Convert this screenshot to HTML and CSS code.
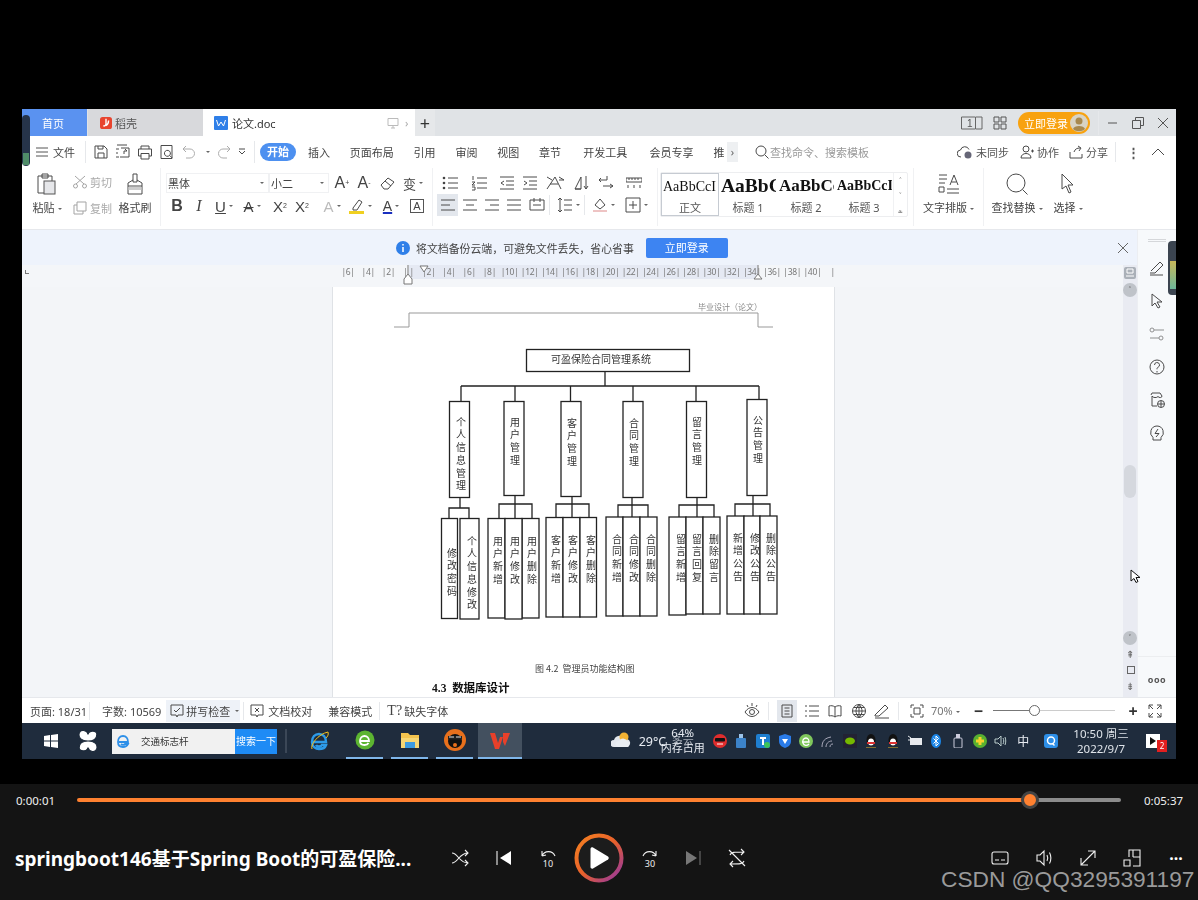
FILE: index.html
```html
<!DOCTYPE html>
<html lang="zh-CN">
<head>
<meta charset="utf-8">
<title>论文.doc</title>
<link rel="stylesheet" href="styles.css">
</head>
<body>
<div class="screen">
  <div class="window">
    <div class="meter-left"><span></span></div>
    <div class="meter-right"><span></span></div>

    <div class="tabs">
      <div class="tab home">首页</div>
      <div class="tab dao">
        <svg class="i12" viewBox="0 0 14 14"><rect width="14" height="14" rx="3" fill="#e8442e"/><path d="M7 2v6c0 2-2 3-3 2M10 4c0 3-1 5-3 6" stroke="#fff" stroke-width="1.6" fill="none"/></svg>
        <span>稻壳</span>
      </div>
      <div class="tab doc">
        <svg class="i14" viewBox="0 0 14 14"><rect width="14" height="14" rx="1" fill="#2f7fe8"/><path d="M2.5 4l2 6 2.500-4 2.500 4 2-6" stroke="#fff" stroke-width="1" fill="none"/></svg>
        <span class="doc-name">论文.doc</span>
        <svg class="i12 auto" viewBox="0 0 12 12"><path d="M1 1.500h10v7H1zM6 8.500v2.500M4 11h4" fill="none" stroke="#bbb"/></svg>
        <span class="more">›</span>
      </div>
      <div class="tab plus">+</div>
      <div class="tabs-right">
        <svg class="book" viewBox="0 0 22 14"><path d="M.5 1h14v12H.5zM15 1h6v12h-6" fill="none" stroke="#666"/><text x="6" y="11" class="book-t">1</text></svg>
        <svg class="i14" viewBox="0 0 14 14"><path d="M1 1h5v5H1zM8 1h5v5H8zM1 8h5v5H1zM8 8h5v5H8z" fill="none" stroke="#555"/></svg>
        <div class="login-pill">立即登录<svg class="avatar" viewBox="0 0 18 18"><circle cx="9" cy="9" r="9" fill="#d8d3c4"/><circle cx="9" cy="7" r="3.500" fill="#a8894f"/><path d="M3 15c1-4 11-4 12 0-3 3-9 3-12 0z" fill="#a8894f"/></svg></div>
        <i class="vsep tall"></i>
        <svg class="i12 min" viewBox="0 0 12 12"><path d="M1 6h9" stroke="#555"/></svg>
        <svg class="i12 rest" viewBox="0 0 12 12"><path d="M.5 3.500h8v8h-8zM3.500 3.500v-3h8v8h-3" fill="none" stroke="#555"/></svg>
        <svg class="i12 clo" viewBox="0 0 12 12"><path d="M1 1l10 10M11 1L1 11" stroke="#555"/></svg>
      </div>
    </div>

    <div class="menu">
      <svg class="i12 ham" viewBox="0 0 12 12"><path d="M0 2h12M0 6h12M0 10h12" stroke="#555"/></svg>
      <span class="m-file">文件</span>
      <i class="vsep"></i>
      <div class="quick">
        <svg class="i16" viewBox="0 0 16 16"><path d="M2 2h9l3 3v9H2zM5 14V9h6v5M5 2v3h5V2" class="ln"/></svg>
        <svg class="i16" viewBox="0 0 16 16"><path d="M2 1h10M1 5h3M1 9h2M1 13h3M6 4h8v9H5M9 10V7h3l-2-2" class="ln"/></svg>
        <svg class="i16" viewBox="0 0 16 16"><path d="M4 5V2h8v3M1.500 5h13v7H12M4 12H1.500V5M4 9.500h8V15H4z" class="ln"/></svg>
        <svg class="i16" viewBox="0 0 16 16"><path d="M2 1.500h11v13H2zM10.500 11.500a3 3 0 1 1 .1-.1l2.500 2.500" class="ln"/></svg>
        <svg class="i16 dim" viewBox="0 0 16 16"><path d="M5 2L2 5l3 3M2 5h7a4 4 0 0 1 0 9H5" class="ln"/></svg>
        <b class="caret"></b>
        <svg class="i16 dim redo" viewBox="0 0 16 16"><path d="M11 2l3 3-3 3M14 5H7a4 4 0 0 0 0 9h4" class="ln"/></svg>
        <svg class="i8" viewBox="0 0 8 8"><path d="M1 1h6M1 3l3 3 3-3" class="ln"/></svg>
      </div>
      <i class="vsep"></i>
      <span class="pill">开始</span>
      <nav class="m-items">
        <span>插入</span><span>页面布局</span><span>引用</span><span>审阅</span><span>视图</span><span>章节</span>
        <span class="x1">开发工具</span><span class="x1">会员专享</span><span class="cut">推</span>
      </nav>
      <span class="chev">›</span>
      <div class="search">
        <svg class="i14" viewBox="0 0 14 14"><circle cx="6" cy="6" r="5" class="ln"/><path d="M10 10l3.500 3.500" class="ln"/></svg>
        <span>查找命令、搜索模板</span>
      </div>
      <div class="m-right">
        <svg class="i16" viewBox="0 0 16 16"><path d="M4 13a3.500 3.500 0 0 1-.5-7A4.500 4.500 0 0 1 12 5.500" class="ln"/><circle cx="11" cy="11" r="3.500" fill="#667"/></svg><span>未同步</span>
        <svg class="i14 g1" viewBox="0 0 14 14"><circle cx="6" cy="4" r="3" class="ln"/><path d="M1 13c0-6 10-6 10 0zM11 6h3M12.500 4.500v3" class="ln"/></svg><span>协作</span>
        <svg class="i14 g2" viewBox="0 0 14 14"><path d="M1 7v6h12V9M5 7c1-3 3-4 6-4M9 1l3 2-2 3" class="ln"/></svg><span>分享</span>
        <i class="vsep mid"></i>
        <span class="kebab">⋮</span>
        <svg class="i12 g3" viewBox="0 0 12 12"><path d="M0 9l6-6 6 6" class="ln"/></svg>
      </div>
    </div>

    <div class="ribbon">
      <section class="g clip">
        <div class="bigcol paste">
          <svg class="i22" viewBox="0 0 22 22"><path d="M2 3h14v17H2zM6 1h6v4H6z" class="ln"/><rect x="8" y="8" width="11" height="13" fill="#e6e7ea" stroke="#555"/></svg>
          <span>粘贴<b class="caret"></b></span>
        </div>
        <div class="smallcol">
          <div class="s dimtxt"><svg class="i14" viewBox="0 0 14 14"><path d="M2 1l9 8M12 1L3 9" class="ln"/><circle cx="2.500" cy="11" r="2" class="ln"/><circle cx="11.500" cy="11" r="2" class="ln"/></svg>剪切</div>
          <div class="s dimtxt"><svg class="i14" viewBox="0 0 14 14"><path d="M4 1h9v9H4zM4 4H1v9h9v-3" class="ln"/></svg>复制</div>
        </div>
        <div class="bigcol brush">
          <svg class="i22" viewBox="0 0 22 22"><path d="M9 1h4v8H9zM9 7L4 10v3h14v-3l-5-3M4 13v8h14v-8" class="ln"/><rect x="4.500" y="14" width="13" height="3" fill="#ccc"/></svg>
          <span>格式刷</span>
        </div>
      </section>
      <i class="gsep"></i>
      <section class="g font">
        <div class="row">
          <div class="combo name"><span>黑体</span><b class="caret"></b></div>
          <div class="combo size"><span>小二</span><b class="caret"></b></div>
          <span class="tg big first">A<sup>+</sup></span>
          <span class="tg big">A<sup>-</sup></span>
          <svg class="i16 g4" viewBox="0 0 16 16"><path d="M1 10l7-7 6 4-6 7H4zM5 6l6 5" class="ln"/></svg>
          <span class="tg pin">变<b class="caret"></b></span>
        </div>
        <div class="row two">
          <span class="tg bold">B</span>
          <span class="tg ital">I</span>
          <span class="tg und">U<b class="caret"></b></span>
          <span class="tg strike">A<b class="caret"></b></span>
          <span class="tg sc first">X<sup>2</sup></span>
          <span class="tg sc">X<sub>2</sub></span>
          <span class="tg ghost">A<b class="caret"></b></span>
          <svg class="i16 g5" viewBox="0 0 16 16"><path d="M4 10l6-8 3 2-5 8H4z" class="ln"/><rect y="13" width="15" height="3" fill="#f0d020"/></svg><b class="caret"></b>
          <span class="tg blueA">A<b class="caret"></b></span>
          <span class="tg boxA">A</span>
        </div>
      </section>
      <i class="gsep"></i>
      <section class="g para">
        <div class="row r1">
          <svg class="i22" viewBox="0 0 22 16"><path d="M7 3h10M7 8h10M7 13h10" class="ln"/><circle cx="3" cy="3" r="1.300" fill="#444"/><circle cx="3" cy="8" r="1.300" fill="#444"/><circle cx="3" cy="13" r="1.300" fill="#444"/></svg>
          <svg class="i22" viewBox="0 0 22 16"><path d="M7 3h10M7 8h10M7 13h10M3 1v4M2 7h3l-3 3h3M2 12h3v3H2" class="ln"/></svg>
          <svg class="i16" viewBox="0 0 16 16"><path d="M1 2h14M7 6h8M7 10h8M1 14h14M5 6L2 8l3 2" class="ln"/></svg>
          <svg class="i16" viewBox="0 0 16 16"><path d="M1 2h14M7 6h8M7 10h8M1 14h14M2 6l3 2-3 2" class="ln"/></svg>
          <svg class="i22" viewBox="0 0 22 16"><path d="M2 2l5 3M2 14L10 2l6 12M5 9h8M14 2l5 3-5 0" class="ln"/></svg>
          <svg class="i16" viewBox="0 0 16 16"><path d="M1 14L7 2v12zM1 14h6M12 1v13M10 11l2 3 2-3" class="ln"/></svg>
          <svg class="i22" viewBox="0 0 22 16"><path d="M2 5h8V1M2 5l2-2M2 5l2 2M6 11h10M13 9l3 2-3 2" class="ln"/></svg>
          <svg class="i16" viewBox="0 0 16 16"><path d="M0 3h16v4H0zM3 3v2M6 3v2M9 3v2M12 3v2M2 10v3M8 10v3M14 10v3" class="ln"/></svg>
        </div>
        <div class="row r2">
          <span class="alignon"><svg class="i14" viewBox="0 0 14 14"><path d="M0 2h14M0 7h9M0 12h14" class="ln"/></svg></span>
          <svg class="i14" viewBox="0 0 14 14"><path d="M0 2h14M3 7h8M0 12h14" class="ln"/></svg>
          <svg class="i14" viewBox="0 0 14 14"><path d="M0 2h14M5 7h9M0 12h14" class="ln"/></svg>
          <svg class="i14" viewBox="0 0 14 14"><path d="M0 2h14M0 7h14M0 12h14" class="ln"/></svg>
          <svg class="i16" viewBox="0 0 16 16"><path d="M1 3h14v10H1zM5 1v4M11 1v4M4 8h8" class="ln"/></svg>
          <i class="vsep mid"></i>
          <svg class="i16" viewBox="0 0 16 16"><path d="M3 1v14M1 3l2-2 2 2M1 13l2 2 2-2M7 3h8M7 8h8M7 13h8" class="ln"/></svg><b class="caret"></b>
          <i class="vsep mid"></i>
          <svg class="i16" viewBox="0 0 16 16"><path d="M3 8l5-6 5 6-5 4z" class="ln"/><path d="M1 14h14" stroke="#d88" fill="none"/></svg><b class="caret"></b>
          <svg class="i16 g6" viewBox="0 0 16 16"><path d="M1 1h14v14H1zM8 4v8M4 8h8" class="ln"/></svg><b class="caret"></b>
        </div>
      </section>
      <i class="gsep"></i>
      <section class="styles">
        <div class="st on"><span class="aa a0">AaBbCcI</span><span>正文</span></div>
        <div class="st"><span class="aa a1">AaBbCcI</span><span>标题 1</span></div>
        <div class="st"><span class="aa a2">AaBbCcI</span><span>标题 2</span></div>
        <div class="st"><span class="aa a3">AaBbCcI</span><span>标题 3</span></div>
        <div class="st-scroll"><span>˄</span><span>˅</span><span>⩡</span></div>
      </section>
      <i class="gsep"></i>
      <section class="bigcol typeset">
        <svg class="i22" viewBox="0 0 22 22"><path d="M1 2h8M1 6h8M1 10h6M12 12l4-10 4 10M13.500 9h5M1 14h5v5H1zM9 16h12M9 20h12" class="ln"/></svg>
        <span>文字排版<b class="caret"></b></span>
      </section>
      <i class="gsep"></i>
      <section class="finds">
        <div class="bigcol find">
          <svg class="i22" viewBox="0 0 22 22"><circle cx="10" cy="10" r="9" class="ln"/><path d="M16.500 16.500l5 5" class="ln"/></svg>
          <span>查找替换<b class="caret"></b></span>
        </div>
        <div class="bigcol pick">
          <svg class="i22" viewBox="0 0 22 22"><path d="M5 1v15l4-3 3 7 2-1-3-7h5z" class="ln"/></svg>
          <span>选择<b class="caret"></b></span>
        </div>
      </section>
    </div>

    <div class="main">
      <div class="work">
        <div class="notice">
          <svg class="i14" viewBox="0 0 14 14"><circle cx="7" cy="7" r="7" fill="#2f7fe8"/><path d="M7 6v5M7 3v1.500" stroke="#fff" stroke-width="1.500"/></svg>
          <span class="n-text">将文档备份云端，可避免文件丢失，省心省事</span>
          <span class="n-btn">立即登录</span>
          <svg class="i10 n-close" viewBox="0 0 10 10"><path d="M0 0l10 10M10 0L0 10" stroke="#666"/></svg>
        </div>
        <div class="ruler">
          <span class="corner"></span>
          <div class="ruler-track">
            <span>|6|</span><span>|4|</span><span>|2|</span><span>| |</span><span>|2|</span><span>|4|</span><span>|6|</span><span>|8|</span>
            <span>|10|</span><span>|12|</span><span>|14|</span><span>|16|</span><span>|18|</span><span>|20|</span><span>|22|</span><span>|24|</span>
            <span>|26|</span><span>|28|</span><span>|30|</span><span>|32|</span><span>|34|</span><span>|36|</span><span>|38|</span><span>|40|</span><span>|</span>
          </div>
          <svg class="mark m1" viewBox="0 0 10 20"><path d="M5 0v9M1 14l4-5 4 5v5H1z" fill="#fff" stroke="#777"/></svg>
          <svg class="mark m2" viewBox="0 0 10 20"><path d="M1 1h8L5 7z" fill="#fff" stroke="#777"/></svg>
          <svg class="mark m3" viewBox="0 0 10 20"><path d="M5 0v9M1 14l4-5 4 5z" fill="#fff" stroke="#777"/></svg>
        </div>
        <div class="docarea">
          <div class="pagearea">
            <div class="page">
              <svg class="sheet" viewBox="333 287 501 410" width="501" height="410">
                <text x="698" y="310" class="hd">毕业设计（论文）</text>
                <path class="hline" d="M394 327h15v-14h349v14h15"/>

                <rect class="box" x="526.500" y="349.500" width="163" height="22"/>
                <text x="551" y="362.500" class="root">可盈保险合同管理系统</text>
                <path class="wire" d="M605 372v14M461 386h298M461 386v15M515 386v15M570.500 386v15M633 386v15M696 386v15M759 386v13"/>

                <rect class="box" x="449.500" y="401.500" width="20" height="96"/>
                <rect class="box" x="504" y="401.500" width="20" height="94"/>
                <rect class="box" x="561" y="401.500" width="20" height="95"/>
                <rect class="box" x="623" y="401.500" width="20" height="96"/>
                <rect class="box" x="686.500" y="401.500" width="20" height="96"/>
                <rect class="box" x="747" y="399.500" width="20" height="96"/>
                <text x="461" y="417" class="v">个人信息管理</text>
                <text x="515" y="417" class="v">用户管理</text>
                <text x="572" y="418" class="v">客户管理</text>
                <text x="634" y="418" class="v">合同管理</text>
                <text x="697" y="417" class="v">留言管理</text>
                <text x="758" y="415" class="v">公告管理</text>

                <path class="wire" d="M460 497v11M449 518v-10h20v10M515 495v24M499 519v-15h33v15M572 496v21M556 517v-13h33v13M632 497v20M618 517v-12h30v12M697 497v20M679 517v-12h35v12M753 495v21M735 516v-12h35v12"/>

                <rect class="box" x="441.500" y="518.500" width="16" height="100"/>
                <rect class="box" x="460" y="518.500" width="19" height="100.500"/>
                <text x="452" y="548" class="v">修改密码</text>
                <text x="472" y="536" class="v">个人信息修改</text>

                <rect class="box" x="488" y="518.500" width="17" height="99.500"/>
                <rect class="box" x="522" y="518.500" width="17" height="99.500"/>
                <rect class="box" x="505" y="518.500" width="17" height="100.500"/>
                <text x="498" y="536" class="v">用户新增</text>
                <text x="515" y="536" class="v">用户修改</text>
                <text x="532" y="536" class="v">用户删除</text>

                <rect class="box" x="546" y="517.500" width="17" height="99.500"/>
                <rect class="box" x="563" y="517.500" width="17" height="99.500"/>
                <rect class="box" x="580" y="517.500" width="16.500" height="99.500"/>
                <text x="556" y="535" class="v">客户新增</text>
                <text x="573" y="535" class="v">客户修改</text>
                <text x="591" y="535" class="v">客户删除</text>

                <rect class="box" x="606" y="517" width="17" height="99"/>
                <rect class="box" x="623" y="517" width="17" height="99"/>
                <rect class="box" x="640" y="517" width="17" height="99"/>
                <text x="617" y="534" class="v">合同新增</text>
                <text x="634" y="534" class="v">合同修改</text>
                <text x="651" y="534" class="v">合同删除</text>

                <rect class="box" x="669" y="517" width="17" height="98"/>
                <rect class="box" x="686" y="517" width="17" height="97"/>
                <rect class="box" x="703" y="517" width="17" height="97"/>
                <text x="681" y="534" class="v">留言新增</text>
                <text x="697" y="534" class="v">留言回复</text>
                <text x="714" y="534" class="v">删除留言</text>

                <rect class="box" x="727" y="516" width="17" height="98"/>
                <rect class="box" x="744" y="516" width="16" height="98"/>
                <rect class="box" x="760" y="516" width="17" height="98"/>
                <text x="738" y="533" class="v">新增公告</text>
                <text x="755" y="533" class="v">修改公告</text>
                <text x="771" y="533" class="v">删除公告</text>

                <text x="535" y="671.500" class="cap">图 4.2  管理员功能结构图</text>
                <text x="432" y="692" class="h3">4.3  数据库设计</text>
              </svg>
            </div>
            <svg class="mouse" viewBox="0 0 10 14"><path d="M1 1v11l3-2.500 2 4 2-1-2-4h4z" fill="#fff" stroke="#111"/></svg>
          </div>
          <div class="vscroll">
            <svg class="sq" viewBox="0 0 12 12"><rect width="12" height="12" rx="2" fill="#aab0b8"/><path d="M3 2h6v4H3zM2 9h8" stroke="#fff" fill="none"/></svg>
            <span class="sbtn">˄</span>
            <span class="thumb"></span>
            <span class="sbtn low">˅</span>
            <span class="nav">⇞</span><span class="nav sqn"></span><span class="nav">⇟</span>
          </div>
        </div>
      </div>
      <aside class="side">
        <span class="handle"></span>
        <svg class="i16" viewBox="0 0 16 16"><path d="M2 11L11 2l3 3-8 8H1M1 15h13" class="ln"/></svg>
        <svg class="i16" viewBox="0 0 16 16"><path d="M3 1v12l3-3 3 5 2-1-3-5h5z" class="ln"/></svg>
        <svg class="i16 soft" viewBox="0 0 16 16"><circle cx="3" cy="4" r="2" class="ln"/><path d="M5 4h10M1 12h9" class="ln"/><circle cx="12" cy="12" r="2" class="ln"/></svg>
        <svg class="i16" viewBox="0 0 16 16"><circle cx="8" cy="8" r="7" class="ln"/><path d="M5.500 6a2.500 2.500 0 1 1 3.500 2.300c-1 .5-1 1-1 2M8 12v1.500" class="ln"/></svg>
        <svg class="i16" viewBox="0 0 16 16"><path d="M2 3l1-2h8l2 3c0 2-3 2-4 .5C8 6 4 6 3 4v10h5" class="ln"/><circle cx="12" cy="12" r="3.500" class="ln"/><path d="M12 9v6M9 12h6" class="ln"/></svg>
        <svg class="i16" viewBox="0 0 16 16"><path d="M8 1a6.500 6.500 0 0 1 4 11.500V15H4v-2.500A6.500 6.500 0 0 1 8 1zM9 4L6 8.500h4L7 12" class="ln"/></svg>
        <span class="side-foot">ooo</span>
      </aside>
    </div>

    <div class="status">
      <span>页面: 18/31</span><i class="vsep sm"></i>
      <span>字数: 10569</span>
      <span class="spell"><svg class="i14" viewBox="0 0 14 14"><path d="M1 1h12v10H8l-1 2-1-2H1zM4 6l2 2 4-4" class="ln"/></svg>拼写检查<b class="caret"></b></span><i class="vsep sm"></i>
      <span class="ic"><svg class="i14" viewBox="0 0 14 14"><path d="M1 1h12v10H8l-1 2-1-2H1zM5 4l4 4M9 4L5 8" class="ln"/></svg>文档校对</span>
      <span class="compat">兼容模式</span><i class="vsep sm"></i>
      <span class="ic"><span class="tq">T?</span>缺失字体</span>
      <div class="st-right">
        <svg class="i16" viewBox="0 0 16 16"><path d="M1 9c4-6 10-6 14 0-4 6-10 6-14 0zM3 2l1 2M8 0v3M13 2l-1 2" class="ln"/><circle cx="8" cy="9" r="2.500" class="ln"/></svg>
        <i class="vsep sm"></i>
        <span class="view-on"><svg class="i14" viewBox="0 0 14 14"><path d="M2 1h10v12H2zM4.500 4h5M4.500 7h5M4.500 10h5" class="ln"/></svg></span>
        <svg class="i14" viewBox="0 0 14 14"><path d="M0 2h2M4 2h10M0 7h2M4 7h10M0 12h2M4 12h10" class="ln"/></svg>
        <svg class="i14 v-book" viewBox="0 0 14 14"><path d="M7 3C5 1.500 3 1.500 1 2v10c2-.5 4-.5 6 1 2-1.500 4-1.500 6-1V2C11 1.500 9 1.500 7 3zM7 3v10" class="ln"/></svg>
        <svg class="i14 v-globe" viewBox="0 0 14 14"><circle cx="7" cy="7" r="6.500" class="ln"/><path d="M.5 7h13M7 .5v13M2 3.500h10M2 10.500h10M7 .5c-4 4-4 9 0 13M7 .5c4 4 4 9 0 13" class="ln"/></svg>
        <svg class="i16" viewBox="0 0 16 16"><path d="M1 12L11 2l3 3-9 8H1zM1 15h14" class="ln"/></svg>
        <i class="vsep sm"></i>
        <svg class="i14 v-fit" viewBox="0 0 14 14"><path d="M1 4V1h3M10 1h3v3M13 10v3h-3M4 13H1v-3M4 4h6v6H4z" class="ln"/></svg>
        <span class="zoomv">70%<b class="caret"></b></span>
        <span class="zm">−</span>
        <span class="slider"><i></i></span>
        <span class="zm plusz">+</span>
        <svg class="i14 fs" viewBox="0 0 14 14"><path d="M1 5V1h4M1 1l4 4M13 5V1H9M13 1L9 5M1 9v4h4M1 13l4-4M13 9v4H9M13 13L9 9" class="ln"/></svg>
      </div>
    </div>

    <div class="taskbar">
      <svg class="win" viewBox="0 0 14 14"><path d="M0 2l6-1v5.500H0zM7 1l7-1v6.500H7zM0 7.500h6V13l-6-1zM7 7.500h7V14l-7-1z" fill="#fff"/></svg>
      <svg class="pinw" viewBox="0 0 20 20"><path d="M10 10C4 10 1 7 2 3s7-3 8 1c1-4 8-4 8 0s-3 6-8 6c6 0 9 3 8 7s-7 3-8-1c-1 4-8 4-8 0s3-6 8-6z" fill="#fff" stroke="#1e2b3b"/></svg>
      <div class="tsearch">
        <span class="ts-in"><svg class="i14" viewBox="0 0 14 14"><path d="M2 8h9c0-4-2-6-5-6S1 4 1 8s3 5 5 5 4-1 5-3H8c-1 1-3 1-4 0" fill="none" stroke="#2d8fe8" stroke-width="1.800"/></svg><em>交通标志杆</em></span>
        <span class="ts-btn">搜索一下</span>
      </div>
      <i class="t-div"></i>
      <div class="apps">
        <span class="app plain"><svg class="i20" viewBox="0 0 20 20"><path d="M3 11h13c0-5-3-8-7-8s-7 3-7 8 4 7 7 7 6-1 7-4h-4c-1 2-5 2-6 0" fill="none" stroke="#2d9be8" stroke-width="2.500"/><path d="M2 18C0 14 8 3 18 1c1 3-1 5-2 6" fill="none" stroke="#f5c21a"/></svg></span>
        <span class="app"><svg class="i20" viewBox="0 0 20 20"><circle cx="10" cy="10" r="9.500" fill="#5cb531"/><path d="M5 11h9c0-3-2-5-4.500-5S5 8 5 11s2 4 4.500 4 3.500-1 4-2" fill="none" stroke="#fff" stroke-width="1.800"/></svg></span>
        <span class="app"><svg class="i20" viewBox="0 0 20 20"><path d="M1 3h7l2 2h9v13H1z" fill="#f4c44e"/><rect x="1" y="8" width="18" height="10" fill="#f7d774"/><rect x="5" y="12" width="10" height="6" fill="#3d9be0"/></svg></span>
        <span class="app"><svg class="i22" viewBox="0 0 22 22"><circle cx="11" cy="11" r="11" fill="#e8701c"/><circle cx="11" cy="12" r="7" fill="#111"/><rect x="4" y="7" width="14" height="3.500" fill="#222"/><path d="M5 8h5M12 8h5" stroke="#ddd"/><circle cx="11" cy="16" r="2" fill="#e8701c"/></svg></span>
        <span class="app wps"><svg class="i22" viewBox="0 0 22 22"><path d="M1 4h5l3 10 2-6h3l-4 12H6zM14 4h7l-5 13-2-4z" fill="#e8402a"/></svg></span>
      </div>
      <div class="tray">
        <svg class="i20" viewBox="0 0 20 20"><path d="M3 16a3.500 3.500 0 0 1 0-7 6 6 0 0 1 11-1 4 4 0 0 1 2 8z" fill="#e4e8ee"/><circle cx="13" cy="6" r="4.500" fill="#f2b233"/><path d="M7 16a3 3 0 0 1 1-6 5 5 0 0 1 9 1 3 3 0 0 1 0 5z" fill="#e9edf2"/></svg>
        <span class="temp">29°C</span>
        <div class="memory"><span class="m1t">64%</span><span class="m0t">多云</span><span class="m2t">内存占用</span></div>
        <span class="ti"><svg class="i14" viewBox="0 0 14 14"><circle cx="7" cy="7" r="7" fill="#e02d2d"/><rect x="2" y="4" width="10" height="3.500" rx="1" fill="#111"/><path d="M4 10h6" stroke="#fff"/></svg></span>
        <span class="ti"><svg class="i14" viewBox="0 0 14 14"><rect x="5" y="0" width="4" height="4" fill="#9cc4ea"/><rect x="2" y="4" width="10" height="10" rx="1" fill="#3c83c9"/></svg></span>
        <span class="ti"><svg class="i14" viewBox="0 0 14 14"><rect width="14" height="14" rx="2" fill="#1f7fd0"/><path d="M4 4h6M7 4v7" stroke="#fff" stroke-width="2"/><circle cx="11" cy="11" r="3" fill="#3cc45a"/></svg></span>
        <span class="ti"><svg class="i14" viewBox="0 0 14 14"><path d="M1 2l6-2 6 2v5c0 4-3 6-6 7-3-1-6-3-6-7z" fill="#2a7be8"/><path d="M4 5h6L7 10z" fill="#fff"/></svg></span>
        <span class="ti"><svg class="i14" viewBox="0 0 14 14"><circle cx="7" cy="7" r="7" fill="#7fc75c"/><path d="M3 8h7c0-2-1-4-3-4S3 6 4 9s4 3 6 1" fill="none" stroke="#fff" stroke-width="1.300"/></svg></span>
        <span class="ti"><svg class="i14" viewBox="0 0 14 14"><path d="M1 13c0-6 3-9 9-10M5 13c0-3 2-6 6-6M9 13c0-2 1-3 3-3" fill="none" stroke="#aab"/></svg></span>
        <span class="ti"><svg class="i14" viewBox="0 0 14 14"><rect width="14" height="14" fill="#223"/><ellipse cx="7" cy="7" rx="5" ry="3.500" fill="#76b900"/></svg></span>
        <span class="ti"><svg class="i14" viewBox="0 0 14 14"><ellipse cx="7" cy="6" rx="4.500" ry="6" fill="#111"/><ellipse cx="7" cy="8" rx="3" ry="3.500" fill="#fff"/><rect x="3" y="8" width="8" height="2" fill="#d33"/><path d="M2 14h10" stroke="#e8b020"/></svg></span>
        <span class="ti"><svg class="i14" viewBox="0 0 14 14"><ellipse cx="7" cy="6" rx="4.500" ry="6" fill="#111"/><ellipse cx="7" cy="8" rx="3" ry="3.500" fill="#fff"/><rect x="3" y="8" width="8" height="2" fill="#d33"/><path d="M2 14h10" stroke="#e8b020"/></svg></span>
        <span class="ti"><svg class="i14" viewBox="0 0 14 14"><rect x="2" y="4" width="12" height="7" fill="#e8eaee"/><path d="M0 2l3 2M0 6h2" stroke="#e8eaee"/></svg></span>
        <span class="ti"><svg class="i14" viewBox="0 0 14 14"><ellipse cx="7" cy="7" rx="5" ry="7" fill="#1c86e8"/><path d="M4.500 4.500l5 5-2.500 2.500V2l2.500 2.500-5 5" fill="none" stroke="#fff"/></svg></span>
        <span class="ti"><svg class="i14" viewBox="0 0 14 14"><rect x="5" y="0" width="4" height="4" fill="#ccd" /><rect x="3" y="4" width="8" height="10" rx="1" fill="none" stroke="#ccd"/></svg></span>
        <span class="ti"><svg class="i14" viewBox="0 0 14 14"><circle cx="7" cy="7" r="7" fill="#58b030"/><path d="M3 7h8M7 3v8" stroke="#f6d02a" stroke-width="3"/></svg></span>
        <span class="ti"><svg class="i14" viewBox="0 0 14 14"><path d="M1 5h3l3-3v10L4 9H1zM9 4c1 2 1 4 0 6M11 3c1 3 1 5 0 8" fill="none" stroke="#bcc"/></svg></span>
        <span class="ti zh">中</span>
        <svg class="qq" viewBox="0 0 14 14"><rect width="14" height="14" rx="3" fill="#2d8fe8"/><circle cx="7" cy="6.500" r="3.500" fill="none" stroke="#fff" stroke-width="1.500"/><path d="M8.500 9.500l2 2" stroke="#fff" stroke-width="1.500"/></svg>
        <div class="clock"><span>10:50 周三</span><span>2022/9/7</span></div>
        <div class="noti"><svg class="i14" viewBox="0 0 14 14"><rect width="14" height="14" fill="#fff"/><path d="M4 3l6 4-6 4z" fill="#111"/></svg><em>2</em></div>
      </div>
    </div>
  </div>
</div>

<div class="player">
  <div class="timeline">
    <span class="time">0:00:01</span>
    <div class="bar"><i class="done"></i><i class="knob"></i><i class="rest-bar"></i></div>
    <span class="time">0:05:37</span>
  </div>
  <div class="controls">
    <div class="title">springboot146基于Spring Boot的可盈保险...</div>
    <div class="c-mid">
      <svg class="pi" viewBox="0 0 22 22"><path d="M3 6c6 0 7 10 16 10M3 16c6 0 7-10 16-10M16 3l3 3-3 3M16 13l3 3-3 3" class="wl"/></svg>
      <svg class="pi" viewBox="0 0 22 22"><path d="M4 4v14" class="wl"/><path d="M18 4v14L7 11z" fill="#fff"/></svg>
      <svg class="pi" viewBox="0 0 22 22"><path d="M5 9a7 7 0 0 1 13 0M5 9V4M5 9l4-1" class="wl"/><text x="11" y="20" class="pn">10</text></svg>
      <div class="playbtn"><svg viewBox="0 0 50 50"><defs><linearGradient id="ring" x1="0" y1="0" x2="1" y2="1"><stop offset="0" stop-color="#f58220"/><stop offset=".5" stop-color="#e8602c"/><stop offset="1" stop-color="#8f34a8"/></linearGradient></defs><circle cx="25" cy="25" r="22.500" fill="#1c1c1c" stroke="url(#ring)" stroke-width="4"/><path d="M16.500 16c0-1.500 1.500-2 2.500-1.500l15 9c1 .7 1 2.300 0 3l-15 9c-1 .5-2.500 0-2.500-1.500z" fill="#fff"/></svg></div>
      <svg class="pi" viewBox="0 0 22 22"><path d="M17 9A7 7 0 0 0 4 9M17 9V4M17 9l-4-1" class="wl"/><text x="11" y="20" class="pn">30</text></svg>
      <svg class="pi next" viewBox="0 0 22 22"><path d="M18 4v14" stroke="#777"/><path d="M4 4v14l11-7z" fill="#777"/></svg>
      <svg class="pi" viewBox="0 0 22 22"><path d="M4 8c1-3 4-3 14-3M15 2l3 3-3 3M18 14c-1 3-4 3-14 3M7 20l-3-3 3-3M3 3l16 16" class="wl"/></svg>
    </div>
    <div class="c-right">
      <svg class="pi" viewBox="0 0 22 22"><rect x="3" y="5" width="16" height="12" rx="2" class="wl"/><path d="M6 13h4M12 13h4" class="wl"/></svg>
      <svg class="pi" viewBox="0 0 22 22"><path d="M4 8h3l4-4v14l-4-4H4zM14 8c1 2 1 4 0 6M16.500 5.500c2 4 2 7 0 11" class="wl"/></svg>
      <svg class="pi" viewBox="0 0 22 22"><path d="M4 18L18 4M11 4h7v7M4 11v7h7" class="wl"/></svg>
      <svg class="pi" viewBox="0 0 22 22"><path d="M8 10V3h11v16h-7M12 10h7M12 10V3M3 13h6v6H3z" class="wl"/></svg>
      <span class="dots">···</span>
    </div>
  </div>
  <div class="mark-csdn">CSDN @QQ3295391197</div>
</div>
</body>
</html>
```

FILE: styles.css
```css
* { box-sizing: border-box; }
html, body { margin: 0; padding: 0; }
body {
  width: 1198px;
  height: 900px;
  overflow: hidden;
  background: #000;
  font-family: "Noto Sans", "Noto Sans CJK SC", sans-serif;
  font-size: 11px;
  color: #444;
}
svg { display: block; flex: none; }
i, em { font-style: normal; }
.ln { fill: none; stroke: #4a4a4a; stroke-width: 1; }
.i8 { width: 8px; height: 8px; }
.i10 { width: 10px; height: 10px; }
.i12 { width: 12px; height: 12px; }
.i14 { width: 14px; height: 14px; }
.i16 { width: 16px; height: 16px; }
.i20 { width: 20px; height: 20px; }
.i22 { width: 22px; height: 22px; }
.dim { opacity: .45; }
.soft { opacity: .6; }

.caret {
  display: inline-block;
  width: 0; height: 0;
  margin-left: 3px;
  vertical-align: middle;
  border-left: 2px solid transparent;
  border-right: 2px solid transparent;
  border-top: 2px solid #666;
  flex: none;
}
.vsep { display: block; width: 1px; height: 22px; background: #e6e8eb; flex: none; }
.vsep.tall { height: 24px; margin: 0 8px; }
.vsep.mid { height: 20px; }
.vsep.sm { height: 18px; }

.screen { padding: 109px 22px 25px; height: 784px; }
.window {
  position: relative;
  width: 1154px;
  height: 650px;
  display: flex;
  flex-direction: column;
  background: #fff;
  filter: blur(.35px);
}
.meter-left, .meter-right {
  position: absolute;
  z-index: 5;
  background: #26344a;
  border-radius: 4px;
  overflow: hidden;
}
.meter-left { left: 0; top: 6px; width: 8px; height: 51px; }
.meter-left span { position: absolute; left: 1px; right: 1px; bottom: 1px; height: 12px; background: #4f8c68; }
.meter-right { right: 0; top: 132px; width: 8px; height: 54px; background: #3b4450; border-radius: 4px 0 0 4px; }
.meter-right span { position: absolute; left: 2px; right: 0; top: 20px; bottom: 6px; background: linear-gradient(#c8b85a, #6db79a); }

/* tab strip */
.tabs { height: 27px; display: flex; background: #e0e3e6; flex: none; }
.tab { display: flex; align-items: center; height: 27px; font-size: 11px; }
.home { width: 65px; padding-left: 20px; background: #5a92f0; color: #fff; }
.dao { width: 115px; margin-left: 1px; padding-left: 12px; gap: 3px; background: #d8d9dc; color: #555; }
.doc { width: 212px; padding: 0 0 0 11px; gap: 4px; background: #fff; color: #333; }
.doc-name { font-size: 11px; }
.auto { margin-left: auto; }
.more { width: 12px; padding-left: 2px; color: #aaa; }
.plus { width: 20px; justify-content: center; background: #e6e8ea; color: #333; font-size: 18px; }
.tabs-right { margin-left: auto; display: flex; align-items: center; padding-right: 7px; gap: 0; }
.book { width: 22px; height: 14px; margin-right: 10px; }
.book-t { font: 10px "Liberation Sans", sans-serif; fill: #555; }
.login-pill {
  display: flex; align-items: center;
  width: 72px; height: 22px;
  margin-left: 11px;
  padding-left: 6px;
  gap: 2px;
  border-radius: 11px;
  background: #f8a20f;
  color: #fff;
  font-size: 11px;
  white-space: nowrap;
}
.avatar { width: 18px; height: 18px; }
.rest { margin-left: 13px; }
.clo { margin-left: 13px; }

/* menu row */
.menu { height: 32px; display: flex; align-items: center; padding-left: 14px; flex: none; font-size: 11px; color: #444; white-space: nowrap; }
.m-file { margin: 0 10px 0 5px; }
.quick { display: flex; align-items: center; gap: 6px; margin: 0 6px 0 7px; width: 155px; }
.pill { width: 36px; height: 18px; border-radius: 9px; margin-left: 5px; background: #4d90f0; color: #fff; font-weight: 700; text-align: center; line-height: 18px; }
.m-items { display: flex; gap: 19.800px; margin-left: 12px; width: 417px; }
.m-items .x1 { margin-left: 2.500px; }
.m-items .cut { width: 12px; overflow: hidden; margin-left: 0; }
.chev { width: 11px; height: 20px; line-height: 20px; margin-left: 2px; text-align: center; background: #eef0f2; color: #666; }
.search { display: flex; align-items: center; gap: 1px; margin-left: 17px; color: #999; }
.m-right { margin-left: auto; display: flex; align-items: center; padding-right: 12px; gap: 3px; color: #555; }
.g1 { margin-left: 8px; }
.g2 { margin-left: 7px; }
.m-right .vsep { margin: 0 8px 0 4px; }
.kebab { width: 8px; font-weight: 700; font-size: 13px; }
.g3 { margin-left: 14px; }

/* ribbon */
.ribbon {
  height: 62px;
  display: flex;
  padding-left: 8px;
  flex: none;
  border-bottom: 1px solid #e6e8ec;
  font-size: 11px;
  color: #444;
}
.g { padding-top: 4px; }
.gsep { width: 1px; height: 58px; background: #f0f1f3; flex: none; }
.bigcol { display: flex; flex-direction: column; align-items: center; padding-top: 5px; white-space: nowrap; }
.bigcol span { margin-top: 5px; line-height: 16px; }
.clip { width: 130px; display: flex; padding-top: 0; }
.paste { width: 34px; }
.brush { width: 38px; margin-left: 2px; }
.smallcol { width: 50px; padding: 6px 0 0 9px; display: flex; flex-direction: column; gap: 10px; white-space: nowrap; }
.s { display: flex; align-items: center; gap: 3px; }
.dimtxt { color: #aaa; }
.dimtxt .i14 { opacity: .5; }
.font { width: 266px; margin-left: 5px; }
.row { display: flex; align-items: center; height: 22px; }
.row.two { margin-top: 1px; }
.combo { display: flex; align-items: center; justify-content: space-between; height: 20px; padding: 0 4px 0 1px; border: 1px solid #f0f1f3; }
.combo.name { width: 103px; }
.combo.size { width: 60px; }
.tg { display: inline-flex; align-items: center; justify-content: center; color: #444; font-family: "Liberation Sans", sans-serif; flex: none; }
.tg sup, .tg sub { font-size: 7px; line-height: 0; }
.big { width: 22px; font-size: 16px; font-weight: 300; }
.big.first { margin-left: 2px; }
.g4 { margin-left: 5px; }
.pin { width: 26px; margin-left: 4px; font-family: "Noto Sans CJK SC", sans-serif; font-size: 13px; }
.two .tg { height: 22px; }
.bold { width: 22px; font-weight: 700; font-size: 16px; }
.ital { width: 22px; font-style: italic; font-size: 16px; font-family: "Liberation Serif", serif; }
.und { width: 28px; font-size: 15px; text-decoration: underline; }
.strike { width: 28px; font-size: 15px; text-decoration: line-through; }
.sc { width: 22px; font-size: 15px; }
.sc.first { margin-left: 3px; }
.ghost { width: 30px; margin-left: 4px; font-size: 15px; color: #bbb; }
.g5 { margin-left: 2px; }
.blueA { width: 26px; margin-left: 6px; font-size: 14px; text-decoration: underline #1a2fc0 2px; }
.boxA { width: 14px; height: 14px !important; margin-left: 6px; border: 1px solid #555; font-size: 11px; }
.para { width: 220px; margin-left: 4px; }
.r1 { gap: 7px; padding-left: 4px; }
.r2 { gap: 8px; }
.r2 .vsep { margin: 0 -1px 0 -4px; }
.r2 .caret { margin-left: -5px; }
.alignon { display: flex; align-items: center; justify-content: center; width: 21px; height: 22px; margin-right: -3px; background: #e3e7ed; }
.g6 { margin-left: 2px; }
.styles {
  display: flex;
  width: 248px;
  height: 45px;
  margin: 4px 5px 0 2px;
  border: 1px solid #edeef0;
  border-radius: 2px;
}
.st { width: 58px; display: flex; flex-direction: column; align-items: center; overflow: hidden; font-size: 11px; color: #555; }
.st.on { width: 58px; border: 1px solid #c6cbd2; }
.aa { display: block; width: 56px; height: 26px; line-height: 26px; overflow: hidden; white-space: nowrap; color: #111; font-family: "Liberation Serif", serif; text-align: left; padding-left: 1px; }
.a0 { font-size: 14px; }
.a1 { font-size: 19.500px; font-weight: 700; }
.a2 { font-size: 17px; font-weight: 700; }
.a3 { font-size: 14px; font-weight: 700; }
.st-scroll { width: 14px; display: flex; flex-direction: column; justify-content: space-between; align-items: center; border-left: 1px solid #f0f1f3; font-size: 8px; line-height: 15px; color: #777; }
.typeset { width: 69px; }
.finds { display: flex; padding-left: 7px; }
.find { width: 52px; }
.pick { width: 30px; margin-left: 10px; }

/* main */
.main { height: 467px; display: flex; flex: none; }
.work { width: 1115px; display: flex; flex-direction: column; }
.notice { height: 35px; display: flex; align-items: center; background: #eef3fc; padding-left: 374px; flex: none; }
.n-text { margin-left: 6px; color: #444; font-size: 10.900px; }
.n-btn { width: 82px; height: 20px; margin-left: 12px; background: #3d84f2; color: #fff; line-height: 20px; text-align: center; border-radius: 2px; }
.n-close { margin-left: auto; margin-right: 9px; }

.ruler { position: relative; height: 22px; background: #f4f6f9; flex: none; }
.corner { position: absolute; left: 3px; top: 5px; width: 4px; height: 4px; border-left: 1px solid #777; border-bottom: 1px solid #777; }
.ruler-track {
  display: flex;
  height: 14px;
  padding-left: 316px;
  background: linear-gradient(to right, transparent 387px, #e5e9f3 387px, #e5e9f3 736px, transparent 736px);
  font: 8.500px/14px "Noto Sans", sans-serif;
  letter-spacing: -.3px;
  color: #777;
}
.ruler-track span { width: 20.200px; flex: none; text-align: center; white-space: nowrap; }
.mark { position: absolute; width: 10px; height: 20px; }
.m1 { left: 381px; top: 0; }
.m2 { left: 397px; top: 0; }
.m3 { left: 731px; top: 0; }

.docarea { height: 410px; display: flex; flex: none; }
.pagearea { position: relative; width: 1101px; background: #f3f5f8; padding-left: 311px; }
.page { width: 501px; height: 410px; background: #fff; box-shadow: -1px 0 0 #dfe2e6, 1px 0 0 #dfe2e6; }
.mouse { position: absolute; left: 1108px; top: 282px; width: 10px; height: 14px; z-index: 3; }
.sheet { font-family: "Noto Sans CJK SC", sans-serif; }
.hd { font-size: 8px; fill: #888; }
.hline { fill: none; stroke: #999; }
.box { fill: #fff; stroke: #222; stroke-width: 1.300; }
.wire { fill: none; stroke: #222; stroke-width: 1.300; }
.root { font-size: 10px; fill: #333; }
.v { font-size: 10px; letter-spacing: 2.700px; writing-mode: vertical-rl; text-orientation: upright; fill: #333; }
.cap { font-size: 9px; fill: #444; white-space: pre; }
.h3 { font-size: 11.500px; font-weight: 700; font-family: "Liberation Serif", "Noto Sans CJK SC", serif; fill: #111; white-space: pre; }

.vscroll {
  position: relative;
  width: 14px;
  margin-top: -22px;
  height: 432px;
  background: #e9ebf2;
  display: flex;
  flex-direction: column;
  align-items: center;
  color: #666;
}
.sq { width: 12px; height: 12px; margin-top: 2px; }
.sbtn { width: 14px; height: 14px; margin-top: 4px; background: #bfc3c9; border-radius: 7px; text-align: center; font-size: 8px; line-height: 14px; color: #555; }
.thumb { width: 12px; height: 33px; margin-top: 168px; background: #d5d8de; border-radius: 6px; }
.sbtn.low { margin-top: 133px; }
.nav { width: 14px; height: 16px; text-align: center; font-size: 10px; line-height: 16px; color: #666; }
.sbtn.low + .nav { margin-top: 1px; }
.sqn { position: relative; }
.sqn::before { content: ""; position: absolute; left: 4px; top: 4px; width: 6px; height: 6px; border: 1px solid #666; }

.side {
  width: 39px;
  display: flex;
  flex-direction: column;
  align-items: center;
  gap: 17px;
  padding: 9px 0 0 0;
  background: #f7f9fb;
  border-left: 1px solid #eceef2;
  position: relative;
}
.handle { width: 18px; height: 3px; margin-bottom: 1px; border-top: 1px solid #d5d7da; border-bottom: 1px solid #d5d7da; }
.side-foot { position: absolute; left: 0; right: 0; top: 426px; padding-top: 18px; border-top: 1px solid #eceef0; text-align: center; font-size: 9px; font-weight: 700; letter-spacing: .5px; line-height: 9px; color: #555; }

/* status bar */
.status { height: 26px; display: flex; align-items: center; padding-left: 8px; border-top: 1px solid #e6e8ec; font-size: 11px; color: #444; flex: none; white-space: nowrap; }
.status > .vsep { margin: 0 12px 0 2px; }
.spell { display: flex; align-items: center; gap: 2px; height: 22px; margin-left: 5px; padding: 0 4px; width: 74px; background: #eef2f8; }
.status .spell + .vsep { margin-left: 3px; margin-right: 6px; }
.ic { display: flex; align-items: center; gap: 4px; }
.compat { margin-left: 16px; }
.status .compat + .vsep { margin: 0 7px 0 7px; }
.tq { font: 14px "Liberation Serif", serif; width: 13px; }
.st-right { margin-left: auto; display: flex; align-items: center; gap: 8px; padding-right: 14px; }
.view-on { display: flex; align-items: center; justify-content: center; width: 20px; height: 22px; background: #e3e7ed; }
.v-book { margin-left: 1px; }
.v-globe { margin-left: 2px; }
.v-fit { margin-left: 3px; }
.zoomv { color: #777; margin-left: -1px; width: 34px; }
.zm { width: 11px; font-size: 16px; font-weight: 700; line-height: 16px; color: #333; text-align: center; }
.slider { position: relative; display: block; width: 122px; height: 1px; margin-left: 1px; background: linear-gradient(to right, #777 41px, #ccc 41px); }
.slider i { position: absolute; left: 36px; top: -5px; width: 11px; height: 11px; border: 1px solid #666; background: #fff; border-radius: 50%; }
.plusz { margin-left: 4.500px; }
.fs { margin-left: 1.500px; }

/* taskbar */
.taskbar { height: 36px; display: flex; align-items: center; padding-left: 22px; background: #1f2c3d; flex: none; color: #e8ecf2; white-space: nowrap; }
.win { width: 14px; height: 14px; }
.pinw { width: 22px; height: 22px; margin-left: 19px; }
.tsearch { display: flex; width: 165px; height: 25px; margin-left: 13px; background: #f1f1f1; }
.ts-in { display: flex; align-items: center; width: 123px; padding-left: 5px; color: #333; font-size: 9.500px; }
.ts-in em { margin-left: 10px; }
.ts-btn { width: 42px; background: #1e8bf5; color: #fff; font-size: 10px; line-height: 25px; text-align: center; }
.t-div { width: 2px; height: 24px; margin-left: 8px; background: #3b4757; }
.apps { display: flex; height: 36px; margin-left: 14px; gap: 8px; }
.app { display: flex; align-items: center; justify-content: center; width: 37px; height: 36px; border-bottom: 2px solid #7fb6ea; }
.app.plain { border-bottom: 0; }
.app.wps { width: 44px; margin-left: -3px; background: #43505f; }
.tray { margin-left: auto; display: flex; align-items: center; height: 36px; }
.temp { width: 28px; margin-left: 8px; font-size: 12.500px; }
.memory { position: relative; width: 44px; height: 36px; margin-left: -6px; margin-right: 4px; font-size: 11px; }
.memory span { position: absolute; left: 0; right: 0; text-align: center; white-space: nowrap; }
.m1t { top: 2px; font-size: 11.500px; }
.m0t { top: 9px; opacity: .65; }
.m2t { top: 16px; font-size: 11px; }
.ti { display: flex; align-items: center; justify-content: center; width: 21.700px; }
.zh { font-size: 12px; }
.qq { width: 14px; height: 14px; margin: 0 16px 0 10px; }
.clock { display: flex; flex-direction: column; align-items: center; width: 54px; font-size: 11.500px; line-height: 15px; color: #dfe4ea; }
.noti { position: relative; width: 48px; padding-left: 18px; }
.noti em { position: absolute; left: 29px; top: 6px; width: 10px; height: 12px; background: #e21f1f; color: #fff; font-size: 8px; line-height: 12px; text-align: center; }

/* player */
.player { position: relative; height: 116px; background: #141414; color: #fff; }
.timeline { display: flex; align-items: center; height: 32px; padding: 0 16px; }
.time { width: 38px; font: 11.500px "Noto Sans", sans-serif; color: #f0f0f0; }
.bar { display: flex; align-items: center; width: 1044px; margin: 0 23px; }
.done { display: block; width: 945px; height: 4px; background: #ff8130; border-radius: 2px 0 0 2px; }
.rest-bar { display: block; flex: 1; height: 4px; background: #8c8c8c; border-radius: 0 2px 2px 0; }
.knob { position: relative; display: block; width: 18px; height: 18px; border-radius: 50%; background: #ff8130; border: 3px solid #444; flex: none; margin: 0 -1px 0 -1px; z-index: 1; }
.controls { display: flex; align-items: center; height: 58px; margin-top: 13px; padding-left: 15px; }
.title { width: 434px; font-size: 19px; font-weight: 700; color: #fff; white-space: nowrap; }
.c-mid { display: flex; align-items: center; gap: 22px; }
.pi { width: 22px; height: 22px; }
.wl { fill: none; stroke: #f0f0f0; stroke-width: 1.100; }
.pn { font: 9px "Noto Sans", sans-serif; fill: #f0f0f0; stroke: none; text-anchor: middle; }
.playbtn { width: 50px; height: 50px; margin: 0 -7px; flex: none; }
.playbtn svg { width: 50px; height: 50px; }
.next { margin-left: -1px; }
.c-right { margin-left: auto; display: flex; align-items: center; gap: 22px; padding-right: 11px; }
.dots { width: 22px; text-align: center; font-size: 16px; font-weight: 700; line-height: 22px; color: #fff; }
.mark-csdn { position: absolute; left: 941px; top: 81px; font: 22.700px/28px "Liberation Sans", sans-serif; color: #9a9a9a; white-space: nowrap; }
```
